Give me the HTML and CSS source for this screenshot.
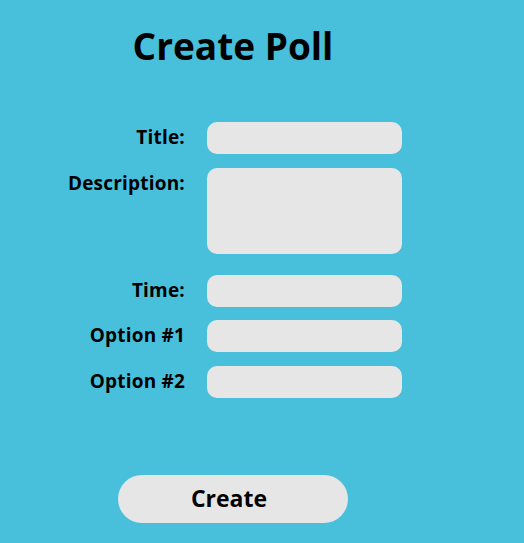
FILE: index.html
```html
<!DOCTYPE html>
<html>
<head>
<meta charset="utf-8">
<link rel="stylesheet" href="styles.css">
</head>
<body>
<div class="page">
  <h1 class="title">Create Poll</h1>
  <form class="form">
    <label class="label">Title:</label>
    <input class="field" type="text">
    <label class="label row-desc">Description:</label>
    <textarea class="field area row-desc"></textarea>
    <label class="label row-time">Time:</label>
    <input class="field row-time" type="text">
    <label class="label row-opt">Option #1</label>
    <input class="field row-opt" type="text">
    <label class="label row-opt2">Option #2</label>
    <input class="field row-opt2" type="text">
  </form>
  <div class="actions">
    <button class="btn" type="button">Create</button>
  </div>
</div>
</body>
</html>
```
FILE: styles.css
```css
html, body {
  margin: 0;
  padding: 0;
  background: #48c0dc;
  height: 100%;
}
body {
  font-family: "Open Sans", Lato, sans-serif;
  color: #000;
}
.page {
  width: 466px;
  padding-top: 22px;
}
.title {
  margin: 0;
  text-align: center;
  font-size: 37px;
  font-weight: 700;
  line-height: 48px;
}
.form {
  display: grid;
  grid-template-columns: 185px 195px;
  column-gap: 22px;
  margin-top: 52px;
  align-items: start;
}
.label {
  text-align: right;
  font-size: 19px;
  font-weight: 700;
  letter-spacing: 0.2px;
  line-height: 31px;
}
.field {
  box-sizing: border-box;
  width: 195px;
  height: 32px;
  border: none;
  border-radius: 10px;
  background: #e6e6e6;
  padding: 0 10px;
  font-family: inherit;
  margin: 0;
  outline: none;
}
.area {
  height: 86px;
  resize: none;
  display: block;
}
.row-desc { margin-top: 14px; }
.row-time { margin-top: 21px; }
.row-opt { margin-top: 13px; }
.row-opt2 { margin-top: 14px; }
.actions {
  display: flex;
  justify-content: center;
  margin-top: 77px;
}
.btn {
  width: 230px;
  height: 48px;
  border: none;
  border-radius: 24px;
  background: #e6e6e6;
  font-family: inherit;
  font-size: 23px;
  font-weight: 700;
  color: #000;
  padding: 0 8px 3px 0;
}
```
